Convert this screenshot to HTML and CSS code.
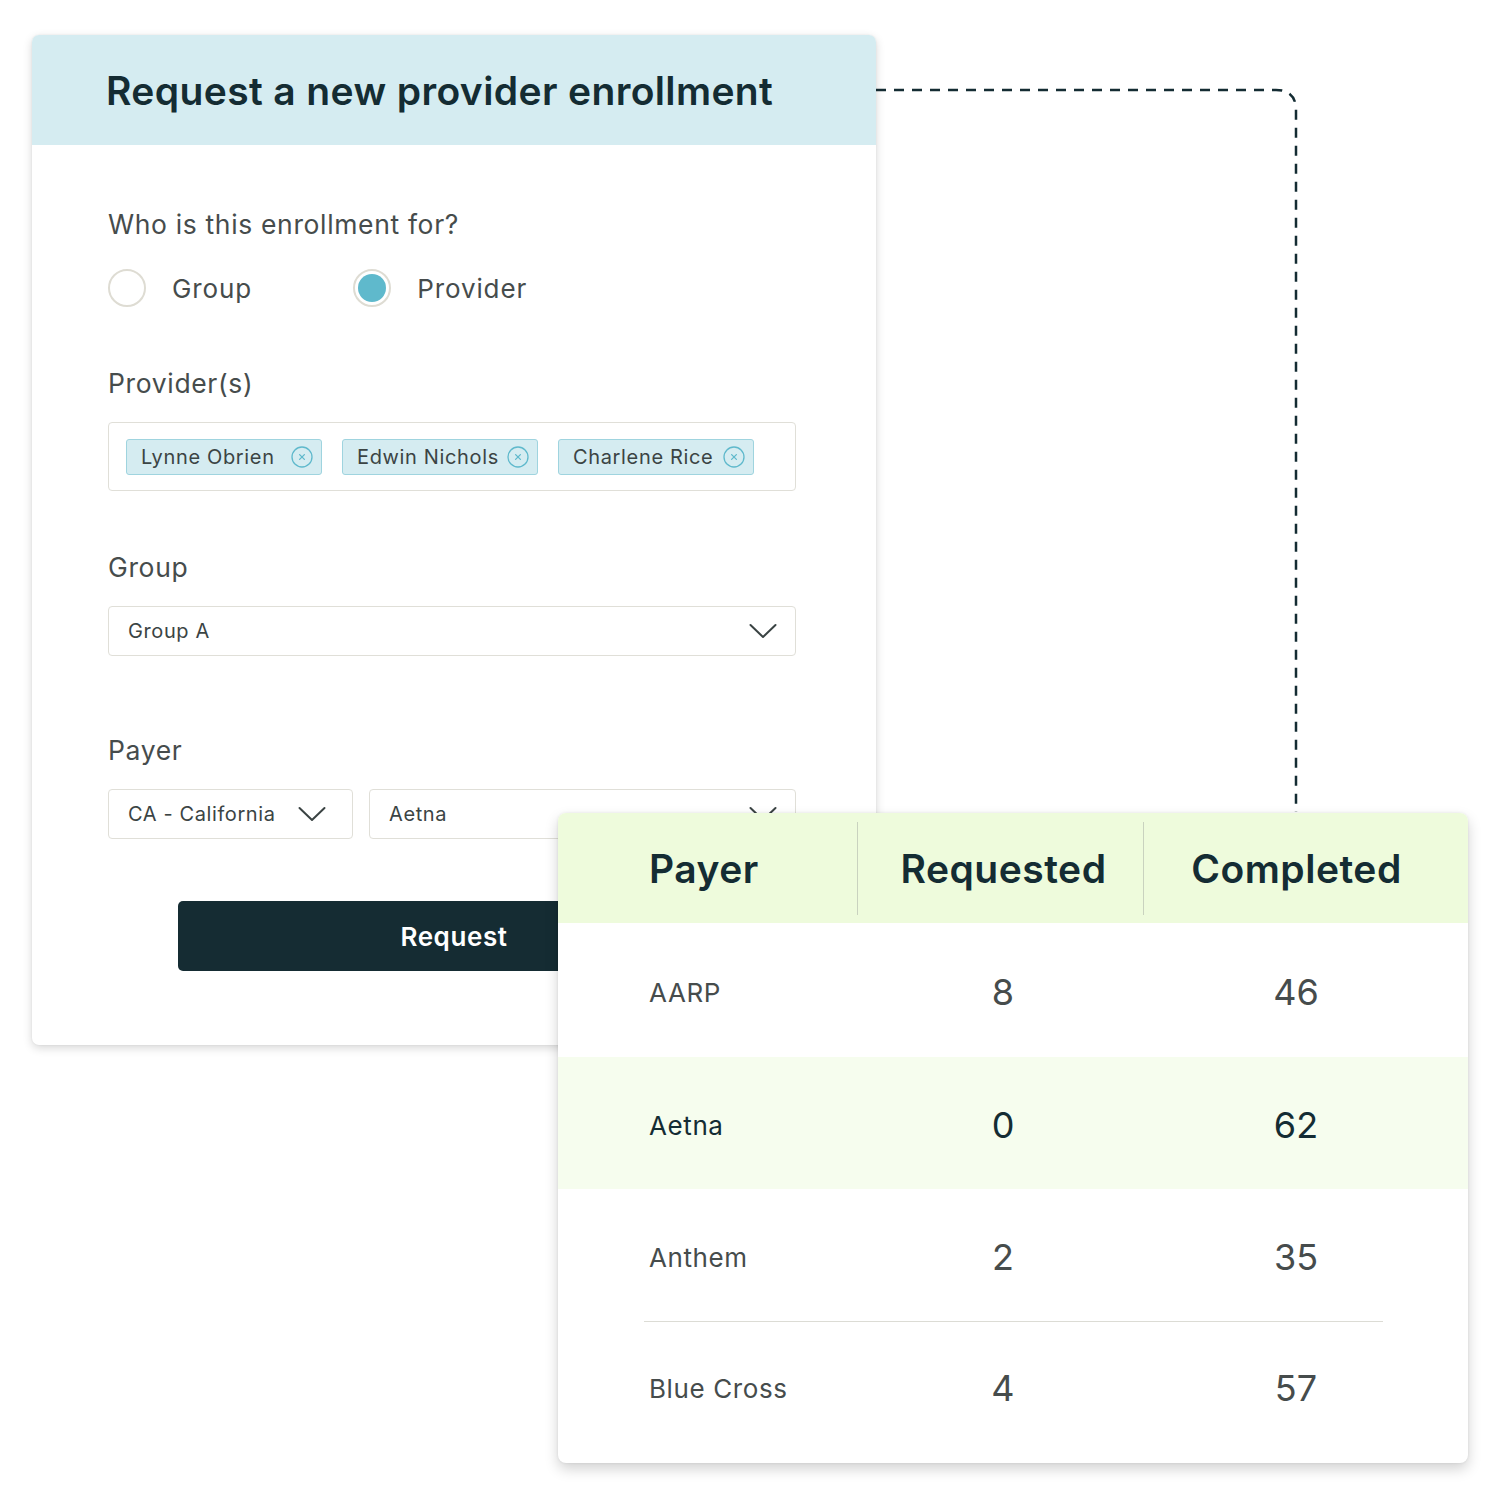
FILE: index.html
```html
<!DOCTYPE html>
<html lang="en">
<head>
<meta charset="utf-8">
<title>Request a new provider enrollment</title>
<link rel="stylesheet" href="styles.css">
</head>
<body>
<div class="canvas">
  <svg class="connector" width="1500" height="1500" viewBox="0 0 1500 1500">
    <path d="M876 90 H1276 Q1296 90 1296 110 V812" fill="none" stroke="#142c33" stroke-width="2.5" stroke-dasharray="10 8"/>
  </svg>

  <section class="form-card">
    <header class="form-head">
      <h1>Request a new provider enrollment</h1>
    </header>
    <div class="form-body">
      <p class="label q-label">Who is this enrollment for?</p>
      <div class="radios">
        <label class="radio"><span class="dot"></span><span>Group</span></label>
        <label class="radio checked"><span class="dot"></span><span>Provider</span></label>
      </div>

      <p class="label sec-label">Provider(s)</p>
      <div class="chip-box">
        <span class="chip">Lynne Obrien <svg class="x" viewBox="0 0 22 22"><circle cx="11" cy="11" r="10" fill="none" stroke="#5fb9cc" stroke-width="1.3"/><path d="M8.6 8.6 L13.4 13.4 M13.4 8.6 L8.6 13.4" stroke="#5fb9cc" stroke-width="1.3" stroke-linecap="round"/></svg></span>
        <span class="chip">Edwin Nichols <svg class="x" viewBox="0 0 22 22"><circle cx="11" cy="11" r="10" fill="none" stroke="#5fb9cc" stroke-width="1.3"/><path d="M8.6 8.6 L13.4 13.4 M13.4 8.6 L8.6 13.4" stroke="#5fb9cc" stroke-width="1.3" stroke-linecap="round"/></svg></span>
        <span class="chip">Charlene Rice <svg class="x" viewBox="0 0 22 22"><circle cx="11" cy="11" r="10" fill="none" stroke="#5fb9cc" stroke-width="1.3"/><path d="M8.6 8.6 L13.4 13.4 M13.4 8.6 L8.6 13.4" stroke="#5fb9cc" stroke-width="1.3" stroke-linecap="round"/></svg></span>
      </div>

      <p class="label sec-label">Group</p>
      <div class="select full">
        <span>Group A</span>
        <svg class="chev" viewBox="0 0 28 16"><path d="M1.5 2 L14 14 L26.5 2" fill="none" stroke="#3a4343" stroke-width="2" stroke-linecap="round" stroke-linejoin="round"/></svg>
      </div>

      <p class="label payer-label">Payer</p>
      <div class="select-row">
        <div class="select state">
          <span>CA - California</span>
          <svg class="chev" viewBox="0 0 28 16"><path d="M1.5 2 L14 14 L26.5 2" fill="none" stroke="#3a4343" stroke-width="2" stroke-linecap="round" stroke-linejoin="round"/></svg>
        </div>
        <div class="select grow">
          <span>Aetna</span>
          <svg class="chev" viewBox="0 0 28 16"><path d="M1.5 2 L14 14 L26.5 2" fill="none" stroke="#3a4343" stroke-width="2" stroke-linecap="round" stroke-linejoin="round"/></svg>
        </div>
      </div>

      <button class="btn">Request</button>
    </div>
  </section>

  <section class="table-card">
    <div class="trow thead">
      <div class="c1">Payer</div>
      <div class="c2 divl">Requested</div>
      <div class="c3 divl">Completed</div>
    </div>
    <div class="trow first">
      <div class="c1 name">AARP</div>
      <div class="c2 num">8</div>
      <div class="c3 num">46</div>
    </div>
    <div class="trow hl">
      <div class="c1 name">Aetna</div>
      <div class="c2 num">0</div>
      <div class="c3 num">62</div>
    </div>
    <div class="trow">
      <div class="c1 name">Anthem</div>
      <div class="c2 num">2</div>
      <div class="c3 num">35</div>
    </div>
    <div class="rule"></div>
    <div class="trow last">
      <div class="c1 name">Blue Cross</div>
      <div class="c2 num">4</div>
      <div class="c3 num">57</div>
    </div>
  </section>
</div>
</body>
</html>
```

FILE: styles.css
```css
* { box-sizing: border-box; }

html, body {
  margin: 0;
  padding: 0;
  background: #ffffff;
}

body {
  font-family: Inter, "Noto Sans", "Liberation Sans", sans-serif;
  color: #142c33;
}

.canvas {
  position: relative;
  width: 1500px;
  height: 1500px;
  padding: 35px 0 0 32px;
}

.connector {
  position: absolute;
  left: 0;
  top: 0;
  pointer-events: none;
}

/* ---------- form card ---------- */
.form-card {
  position: relative;
  width: 844px;
  height: 1010px;
  background: #ffffff;
  border-radius: 7px;
  overflow: hidden;
  box-shadow: 0 3px 10px rgba(0, 0, 0, 0.16), 0 0 2px rgba(0, 0, 0, 0.08);
}

.form-head {
  height: 110px;
  background: #d5ecf1;
  display: flex;
  align-items: center;
  padding-left: 74px;
}

.form-head h1 {
  margin: 0;
  font-size: 39px;
  font-weight: 600;
  letter-spacing: 0.38px;
  color: #142c33;
}

.form-body {
  padding: 63px 80px 0 76px;
  display: flex;
  flex-direction: column;
}

.label {
  margin: 0;
  font-size: 26.5px;
  line-height: 32px;
  color: #464c4c;
  letter-spacing: 0.65px;
}

.radios {
  display: flex;
  margin-top: 29px;
  height: 38px;
  align-items: center;
}

.radio {
  display: flex;
  align-items: center;
  gap: 26px;
  font-size: 26px;
  color: #464c4c;
  letter-spacing: 0.9px;
}

.radio + .radio { margin-left: 101px; }

.dot {
  width: 38px;
  height: 38px;
  border-radius: 50%;
  border: 2px solid #dedcd3;
  background: #ffffff;
  position: relative;
}

.radio.checked .dot::after {
  content: "";
  position: absolute;
  left: 3px;
  top: 3px;
  width: 28px;
  height: 28px;
  border-radius: 50%;
  background: #5fb9cc;
}

.sec-label { margin-top: 60px; }

.chip-box {
  margin-top: 23px;
  height: 69px;
  border: 1.5px solid #e0dfd8;
  border-radius: 4px;
  display: flex;
  align-items: center;
  gap: 20px;
  padding-left: 17px;
}

.chip {
  height: 36px;
  width: 196px;
  background: #d5ecf1;
  border: 1.5px solid #9fd4df;
  border-radius: 3px;
  display: flex;
  align-items: center;
  justify-content: space-between;
  padding: 0 8px 0 14px;
  font-size: 20px;
  color: #3b4444;
  letter-spacing: 0.65px;
  white-space: nowrap;
}

.chip .x {
  width: 22px;
  height: 22px;
  flex: none;
}

.select {
  height: 50px;
  border: 1.5px solid #e0dfd8;
  border-radius: 4px;
  display: flex;
  align-items: center;
  justify-content: space-between;
  padding: 0 18px 0 19px;
  font-size: 20px;
  color: #3b4444;
  letter-spacing: 0.6px;
  background: #ffffff;
}

.select.full { margin-top: 23px; }

.chev {
  width: 28px;
  height: 16px;
  flex: none;
}

.payer-label { margin-top: 78px; }

.select-row {
  margin-top: 23px;
  display: flex;
  gap: 16px;
}

.select.state {
  width: 245px;
  padding-right: 26px;
}

.select.grow { flex: 1; }

.btn {
  margin: 62px 0 0 70px;
  width: 552px;
  height: 70px;
  background: #152c33;
  color: #ffffff;
  border: none;
  border-radius: 5px;
  font-family: inherit;
  font-size: 26px;
  font-weight: 600;
  letter-spacing: 0.6px;
}

/* ---------- table card ---------- */
.table-card {
  position: absolute;
  left: 558px;
  top: 813px;
  width: 910px;
  height: 650px;
  background: #ffffff;
  border-radius: 8px;
  overflow: hidden;
  box-shadow: 0 6px 14px rgba(0, 0, 0, 0.18), 0 0 3px rgba(0, 0, 0, 0.08);
}

.trow {
  display: grid;
  grid-template-columns: 299px 286px 306px;
  height: 132px;
  align-items: center;
}

.trow.first { height: 134px; }

.thead {
  height: 110px;
  background: #eefbdc;
  align-items: stretch;
}

.thead > div {
  display: flex;
  align-items: center;
  font-size: 39px;
  font-weight: 600;
  color: #142c33;
  letter-spacing: 0.5px;
}

.thead .c2 { justify-content: center; padding-left: 6px; }
.thead .c3 { justify-content: center; }

.divl {
  border-left: 1.5px solid #c9d2bf;
  margin: 9px 0 8px;
}

.c1 { padding-left: 91px; }

.name {
  font-size: 26px;
  color: #464c4c;
  letter-spacing: 0.6px;
}

.num {
  text-align: center;
  font-size: 36px;
  color: #464c4c;
}

.num.c2 { padding-left: 6px; }

.trow:not(.thead) > div { padding-top: 4px; }
.trow.last > div { padding-top: 0; }

.hl { background: #f6fdee; }
.hl .name, .hl .num { color: #142c33; }

.rule {
  height: 0;
  border-top: 1.5px solid #dcdcd5;
  margin: 0 85px 0 86px;
}
```
